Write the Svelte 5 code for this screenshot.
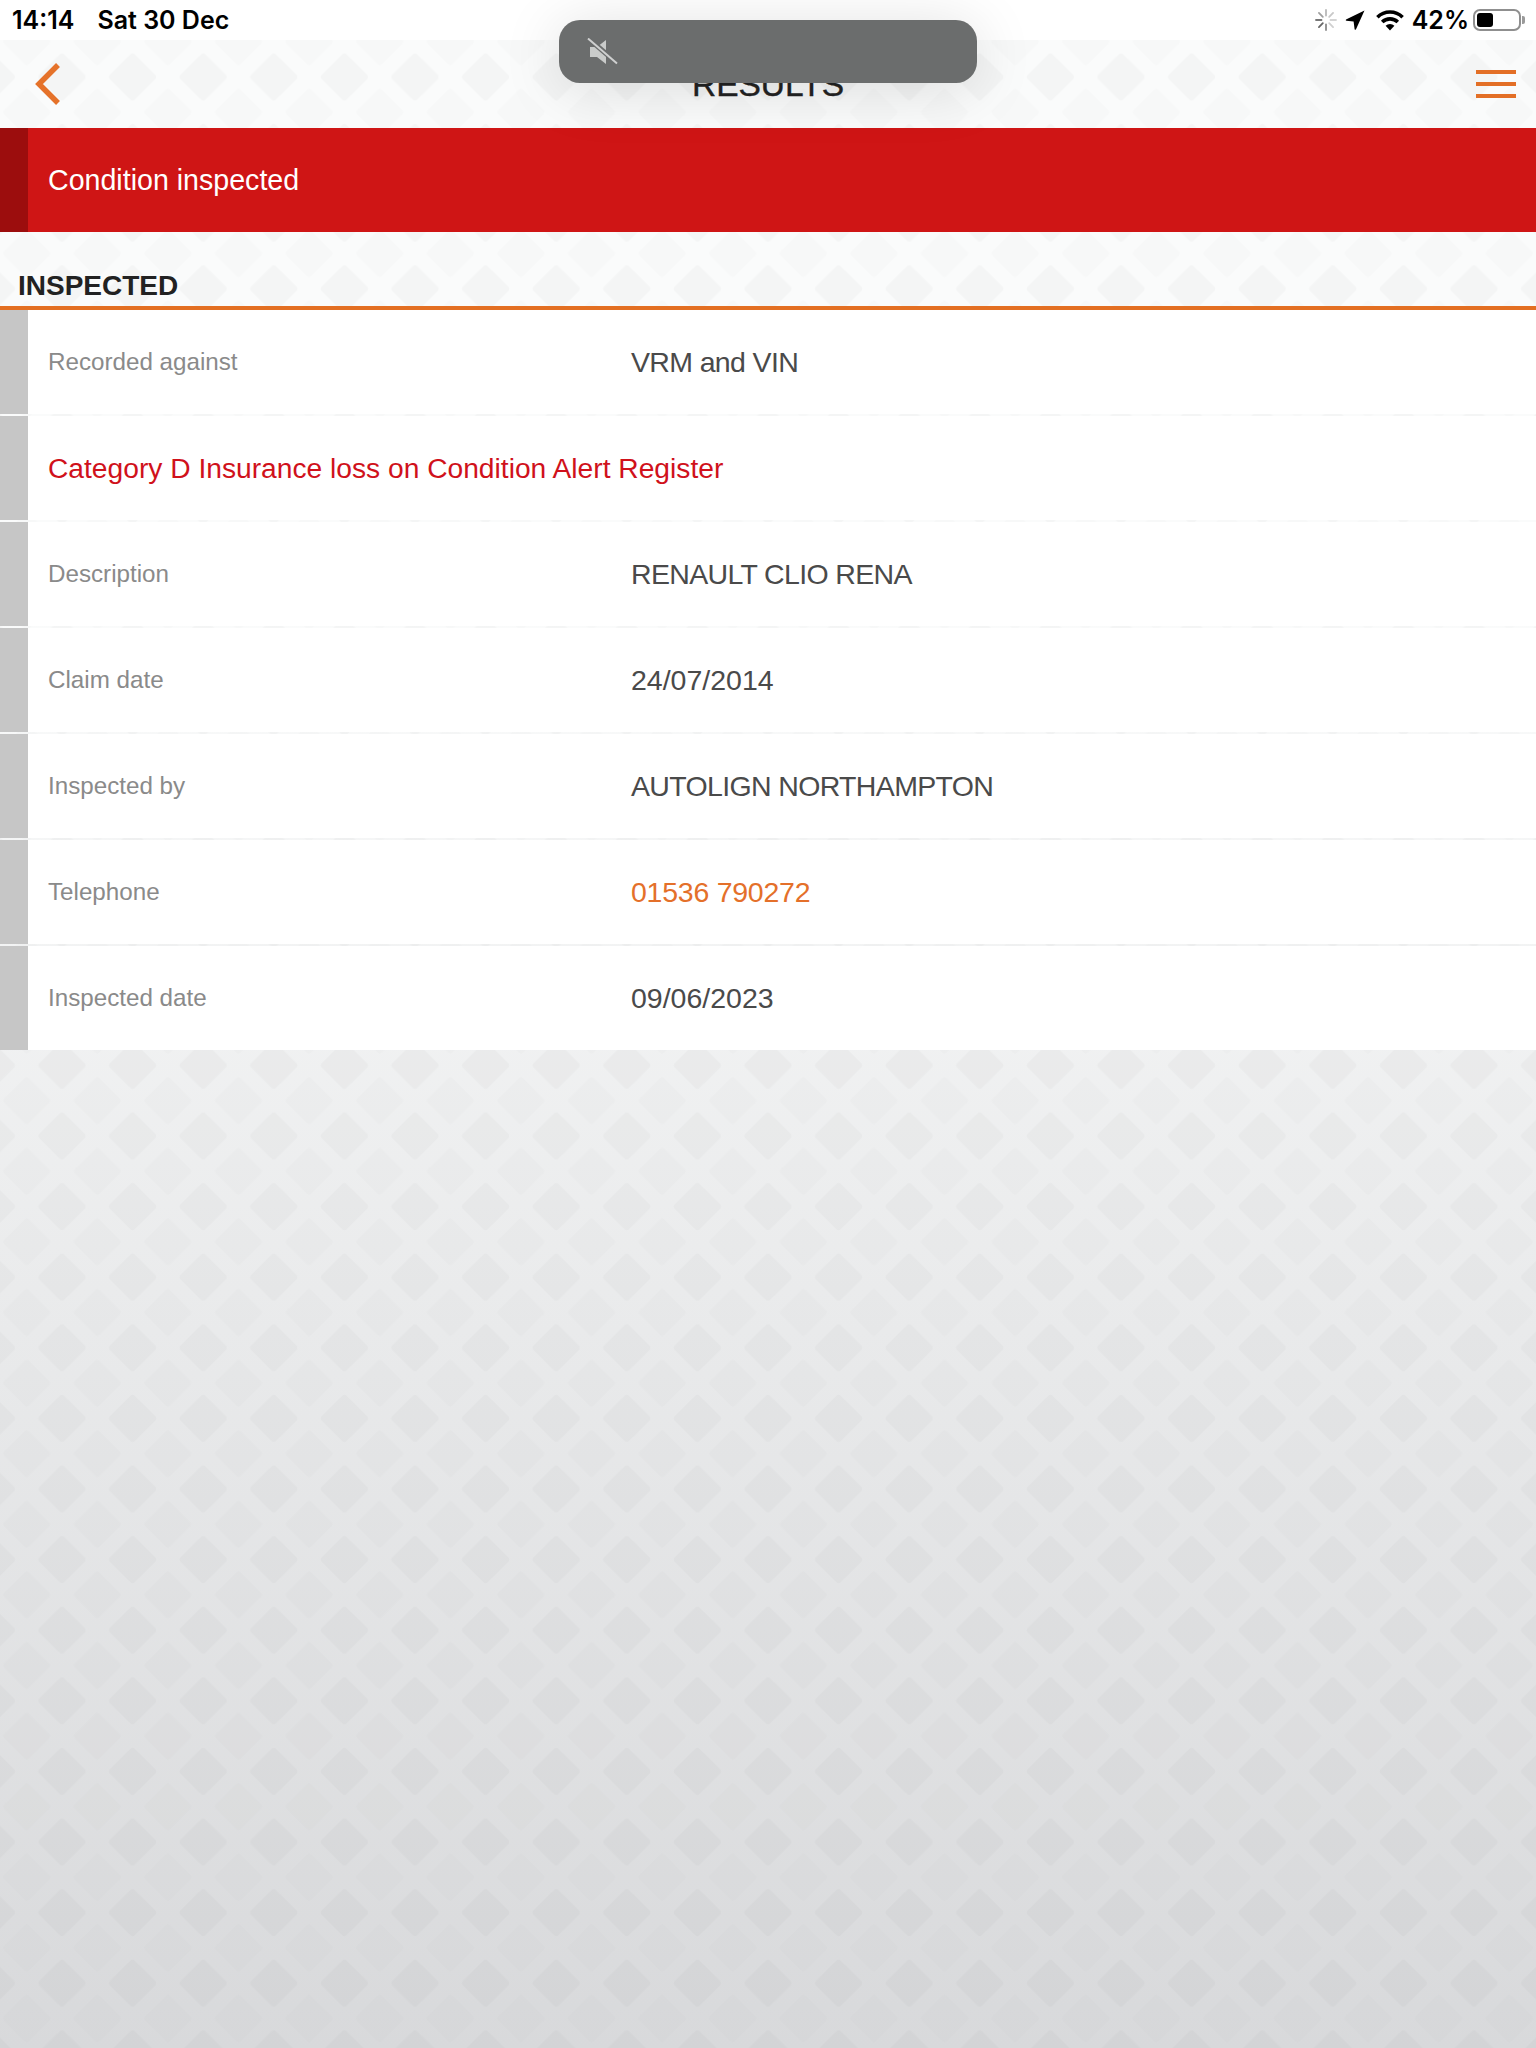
<script>
	const rows = [
		{ label: 'Recorded against', value: 'VRM and VIN', caps: true },
		{ alert: 'Category D Insurance loss on Condition Alert Register' },
		{ label: 'Description', value: 'RENAULT CLIO RENA', caps: true },
		{ label: 'Claim date', value: '24/07/2014' },
		{ label: 'Inspected by', value: 'AUTOLIGN NORTHAMPTON', caps: true },
		{ label: 'Telephone', value: '01536 790272', link: true },
		{ label: 'Inspected date', value: '09/06/2023' }
	];
	const spokes = [0, 45, 90, 135, 180, 225, 270, 315];
	const spokeColors = ['#b8b8b8', '#c8c8c8', '#d4d4d4', '#d0d0d0', '#8a8a8a', '#666', '#777', '#a0a0a0'];
	const tile = 70.6;
</script>

<div class="page">
	<svg class="backdrop" width="1536" height="2048" aria-hidden="true">
		<defs>
			<linearGradient id="fade" x1="0" y1="0" x2="0" y2="1">
				<stop offset="0.3" stop-color="#fafbfb" />
				<stop offset="1" stop-color="#d8d9db" />
			</linearGradient>
			<pattern id="diamonds" width={tile} height={tile} patternUnits="userSpaceOnUse" patternTransform="translate(26.7 41.7)">
				<rect x="-17.5" y="-17.5" width="35" height="35" rx="3" transform="translate({tile / 2} {tile / 2}) rotate(45)" fill="#30303a" fill-opacity="0.032" />
				{#each [[0, 0], [tile, 0], [0, tile], [tile, tile]] as [x, y]}
					<rect x="-17.5" y="-17.5" width="35" height="35" rx="3" transform="translate({x} {y}) rotate(45)" fill="#303038" fill-opacity="0.016" />
				{/each}
			</pattern>
		</defs>
		<rect width="1536" height="2048" fill="url(#fade)" />
		<rect width="1536" height="2048" fill="url(#diamonds)" />
	</svg>

	<div class="status">
		<div class="clock">
			<span>14:14</span>
			<span>Sat 30 Dec</span>
		</div>
		<div class="indicators">
			<svg width="22" height="22" viewBox="-11 -11 22 22">
				{#each spokes as angle, i}
					<line y1="-4.5" y2="-10" stroke={spokeColors[i]} stroke-width="1.8" stroke-linecap="round" transform="rotate({angle})" />
				{/each}
			</svg>
			<svg width="20" height="22" viewBox="0 0 20 22">
				<path d="M19.5 1.5 L1 10.6 Q0.2 11.4 1.4 11.8 L8.6 12.6 L9.6 20.2 Q10.2 21.2 11 20.2 Z" fill="#000" />
			</svg>
			<svg class="wifi" width="28" height="22" viewBox="0 0 28 22">
				<g fill="none" stroke="#000" stroke-width="3.6">
					<path d="M1.4 8.2 A18 18 0 0 1 26.6 8.2" />
					<path d="M6.2 13 A11.2 11.2 0 0 1 21.8 13" />
				</g>
				<path d="M9.6 16.8 A6.2 6.2 0 0 1 18.4 16.8 L14 21.4 Z" fill="#000" />
			</svg>
			<span class="percent">42%</span>
			<div class="battery">
				<div class="charge"></div>
			</div>
			<div class="nub"></div>
		</div>
	</div>

	<header class="nav">
		<svg width="28" height="44" viewBox="0 0 28 44">
			<path d="M26 3 L7 22 L26 41" fill="none" stroke="#e5722a" stroke-width="5.5" />
		</svg>
		<h1>RESULTS</h1>
		<div class="menu">
			<span></span>
			<span></span>
			<span></span>
		</div>
	</header>

	<div class="banner">
		<div class="banner-strip"></div>
		<p>Condition inspected</p>
	</div>

	<h2>INSPECTED</h2>

	<div class="list">
		{#each rows as row}
			<div class="row">
				<div class="strip"></div>
				{#if row.alert}
					<span class="alert">{row.alert}</span>
				{:else}
					<span class="label">{row.label}</span>
					<span class="value" class:link={row.link} class:caps={row.caps}>{row.value}</span>
				{/if}
			</div>
		{/each}
	</div>

	<div class="toast">
		<svg width="32" height="28" viewBox="0 0 32 28">
			<path d="M3 9 H10 L19 2 V26 L10 19 H3 Z" fill="#c9cbca" />
			<path d="M2 1 L30 25" stroke="#6b6d6d" stroke-width="5" />
			<path d="M1 0.5 L30 25.5" stroke="#cfd0d0" stroke-width="2" />
		</svg>
	</div>
</div>

<style>
	:global(body) {
		font-family: 'Liberation Sans', Arial, sans-serif;
	}
	.page {
		position: relative;
		width: 1536px;
		min-height: 2048px;
		overflow: hidden;
	}
	.backdrop {
		position: absolute;
		inset: 0;
		z-index: -1;
	}
	.status {
		height: 40px;
		background: #fff;
		display: flex;
		align-items: center;
		justify-content: space-between;
		padding: 0 11px 0 12px;
		font-family: Inter, sans-serif;
		font-weight: 600;
		font-size: 25px;
		color: #000;
	}
	.clock {
		display: flex;
		gap: 23px;
	}
	.indicators {
		display: flex;
		align-items: center;
		gap: 8px;
	}
	.wifi {
		margin-left: 3px;
	}
	.percent {
		margin-right: -4px;
	}
	.battery {
		width: 48px;
		height: 22px;
		box-sizing: border-box;
		border: 2px solid #8f8f8f;
		border-radius: 7px;
		padding: 2px;
	}
	.charge {
		width: 16px;
		height: 14px;
		background: #000;
		border-radius: 3px;
	}
	.nub {
		width: 3px;
		height: 8px;
		background: #9a9a9a;
		border-radius: 0 2px 2px 0;
		margin-left: -7px;
	}
	.nav {
		height: 88px;
		display: flex;
		align-items: center;
		justify-content: space-between;
		padding: 0 20px 0 32px;
		position: relative;
	}
	h1 {
		position: absolute;
		left: 0;
		right: 0;
		top: 26px;
		margin: 0;
		text-align: center;
		font-size: 33.5px;
		font-weight: 400;
		color: #222;
		-webkit-text-stroke: 0.4px #222;
	}
	.menu {
		width: 40px;
		display: flex;
		flex-direction: column;
		gap: 8px;
	}
	.menu span {
		height: 4px;
		background: #e36f26;
	}
	.banner {
		height: 104px;
		background: #cf1515;
		display: flex;
		align-items: stretch;
	}
	.banner-strip {
		width: 28px;
		background: #9c0d0d;
	}
	.banner p {
		margin: 1px 0 0 20px;
		align-self: center;
		font-size: 28.6px;
		color: #fff;
	}
	h2 {
		margin: 0;
		height: 74px;
		box-sizing: border-box;
		padding: 37px 0 0 18px;
		font-size: 28px;
		line-height: 34px;
		font-weight: 700;
		color: #222;
	}
	.list {
		border-top: 4px solid #e36f22;
		display: flex;
		flex-direction: column;
		gap: 2px;
	}
	.row {
		height: 104px;
		background: #fff;
		display: flex;
		align-items: center;
	}
	.strip {
		width: 28px;
		height: 100%;
		background: #c6c6c6;
		flex: none;
		margin-right: 20px;
	}
	.label {
		width: 583px;
		font-size: 24.2px;
		color: #8a8a8a;
	}
	.value {
		padding-top: 1px;
		font-size: 28.5px;
		color: #4a4a4a;
	}
	.value.caps {
		letter-spacing: -0.65px;
	}
	.value.link {
		letter-spacing: -0.25px;
		color: #e4702a;
	}
	.alert {
		padding-top: 1px;
		font-size: 28.2px;
		color: #d0111b;
	}
	.toast {
		position: absolute;
		left: 559px;
		top: 20px;
		width: 418px;
		height: 63px;
		box-sizing: border-box;
		padding: 18px 0 0 28px;
		background: #6b6d6d;
		border-radius: 21px;
		box-shadow: 0 6px 60px rgba(0, 0, 0, 0.13);
	}
	.toast svg {
		display: block;
	}
</style>
